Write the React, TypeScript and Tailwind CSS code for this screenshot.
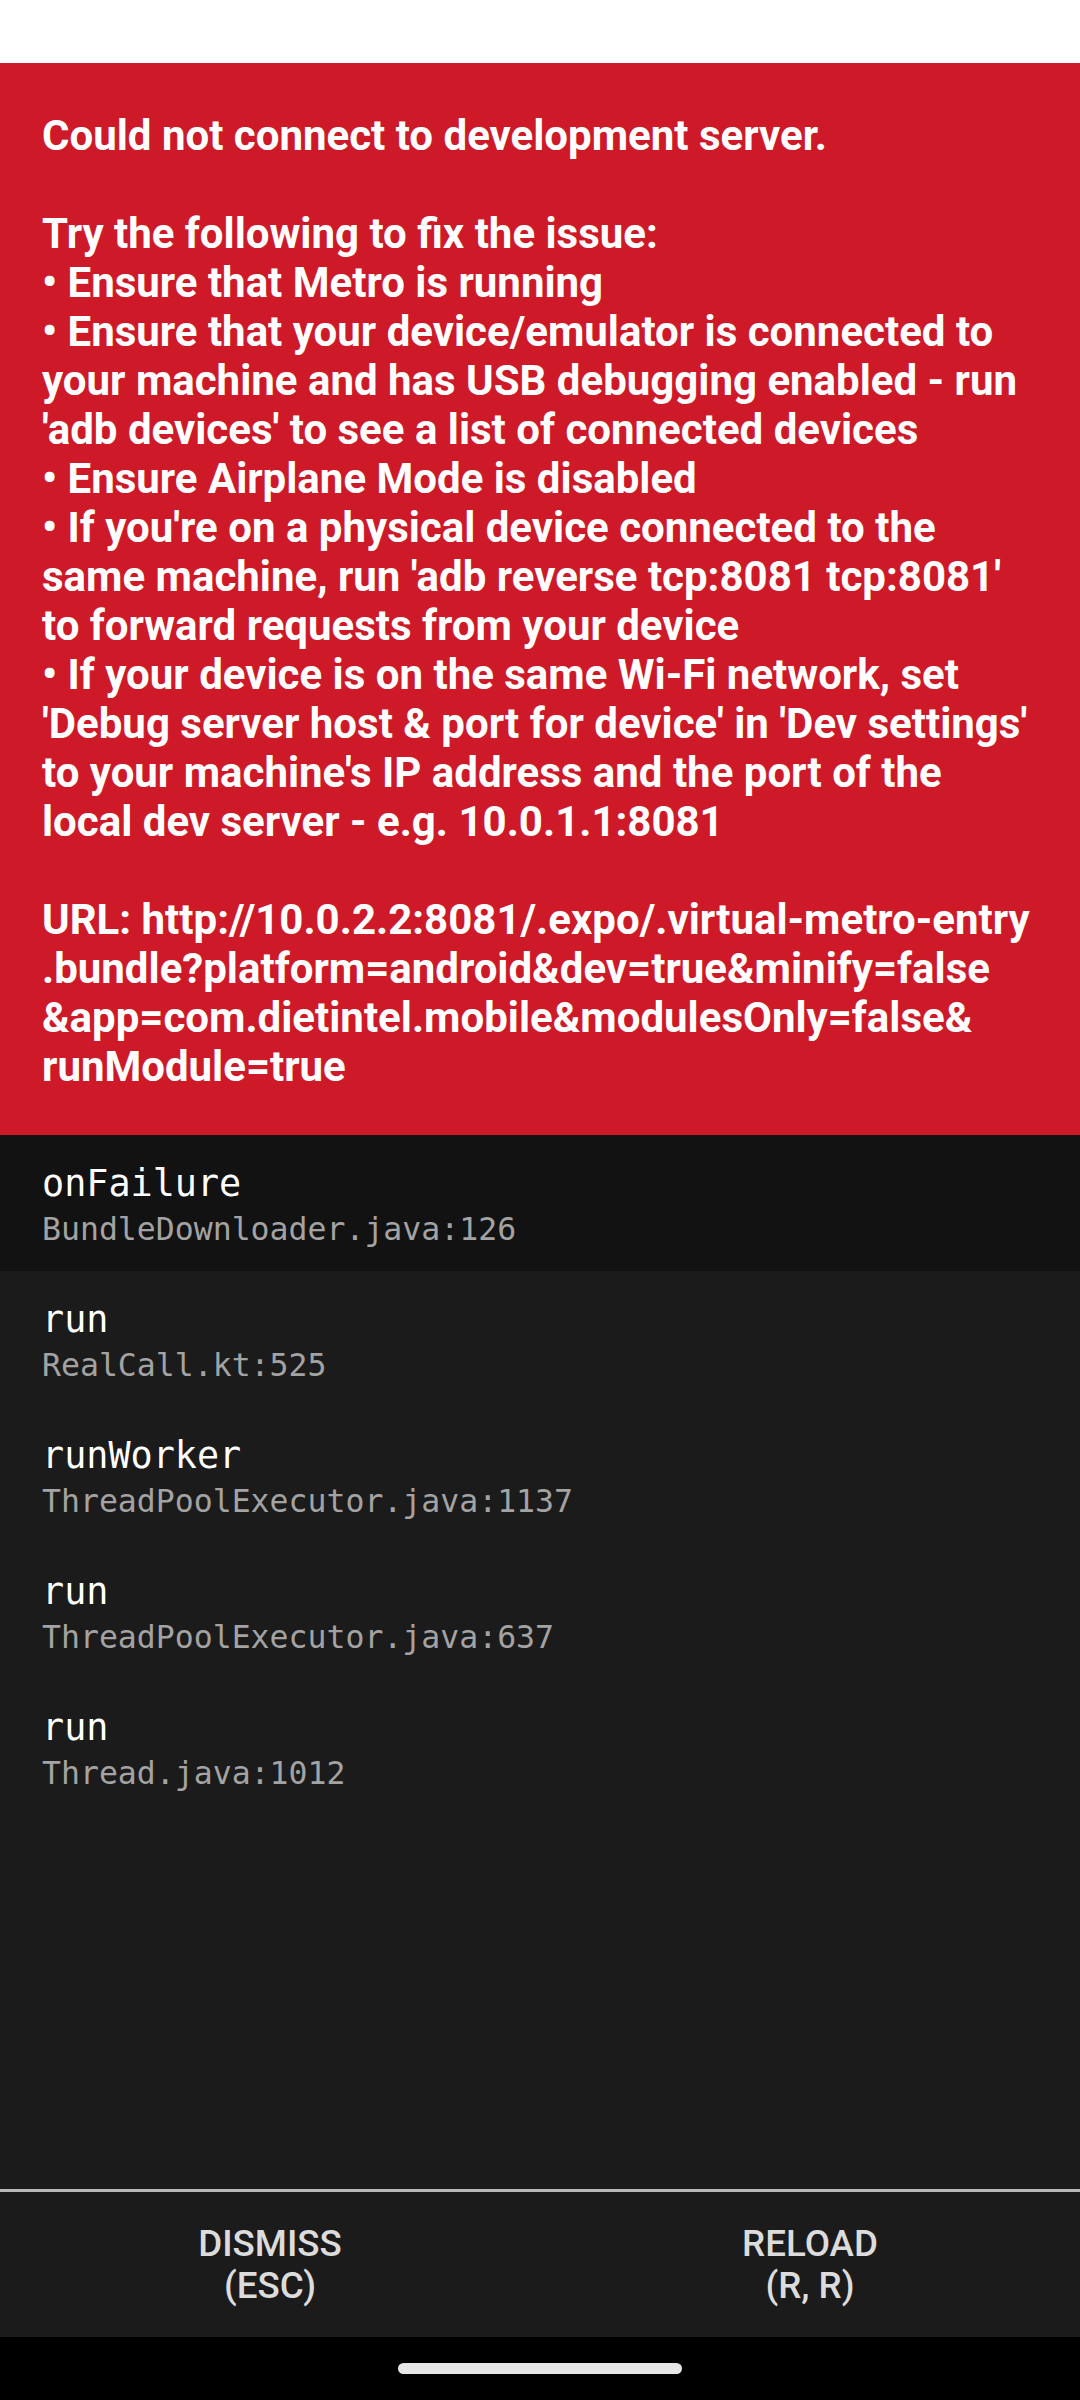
import React from "react";

const message = [
  "Could not connect to development server.",
  "",
  "Try the following to fix the issue:",
  "• Ensure that Metro is running",
  "• Ensure that your device/emulator is connected to",
  "your machine and has USB debugging enabled - run",
  "'adb devices' to see a list of connected devices",
  "• Ensure Airplane Mode is disabled",
  "• If you're on a physical device connected to the",
  "same machine, run 'adb reverse tcp:8081 tcp:8081'",
  "to forward requests from your device",
  "• If your device is on the same Wi-Fi network, set",
  "'Debug server host & port for device' in 'Dev settings'",
  "to your machine's IP address and the port of the",
  "local dev server - e.g. 10.0.1.1:8081",
  "",
  "URL: http://10.0.2.2:8081/.expo/.virtual-metro-entry",
  ".bundle?platform=android&dev=true&minify=false",
  "&app=com.dietintel.mobile&modulesOnly=false&",
  "runModule=true",
].join("\n");

const frames = [
  { method: "onFailure", file: "BundleDownloader.java:126" },
  { method: "run", file: "RealCall.kt:525" },
  { method: "runWorker", file: "ThreadPoolExecutor.java:1137" },
  { method: "run", file: "ThreadPoolExecutor.java:637" },
  { method: "run", file: "Thread.java:1012" },
];

const mono = "font-['DejaVu_Sans_Mono','Liberation_Mono',monospace]";

function StackFrame({ method, file, active }: { method: string; file: string; active?: boolean }) {
  return (
    <div className={`h-[136px] px-[42px] pt-[27px] ${active ? "bg-[#121212]" : ""}`}>
      <p className={`${mono} text-[36.75px] leading-[43px] text-white`}>{method}</p>
      <p className={`${mono} mt-[6px] text-[31.5px] leading-[37px] text-[#a3a3a3]`}>{file}</p>
    </div>
  );
}

function ActionButton({ label, shortcut }: { label: string; shortcut: string }) {
  return (
    <button className="flex flex-1 flex-col items-center justify-center text-[36.75px] font-medium leading-[42px] text-[#dcdcdc]">
      <span>{label}</span>
      <span>{shortcut}</span>
    </button>
  );
}

export default function App() {
  return (
    <div className="flex h-[2400px] w-[1080px] flex-col bg-[#1b1b1b] font-['Roboto','Liberation_Sans',sans-serif]">
      <div className="h-[63px] shrink-0 bg-white" />

      <div className="shrink-0 bg-[#ce1a28] px-[42px] pb-[44px] pt-[48px]">
        <p className="whitespace-pre text-[42px] font-bold leading-[49px] text-white">{message}</p>
      </div>

      <div className="flex-1">
        {frames.map((f, i) => (
          <StackFrame key={i} method={f.method} file={f.file} active={i === 0} />
        ))}
      </div>

      <div className="flex h-[148px] shrink-0 border-t-[3px] border-[#b8b8b8]">
        <ActionButton label="DISMISS" shortcut="(ESC)" />
        <ActionButton label="RELOAD" shortcut="(R, R)" />
      </div>

      <div className="flex h-[63px] shrink-0 items-start justify-center bg-black pt-[26px]">
        <div className="h-[11px] w-[284px] rounded-full bg-[#e6e6e6]" />
      </div>
    </div>
  );
}
